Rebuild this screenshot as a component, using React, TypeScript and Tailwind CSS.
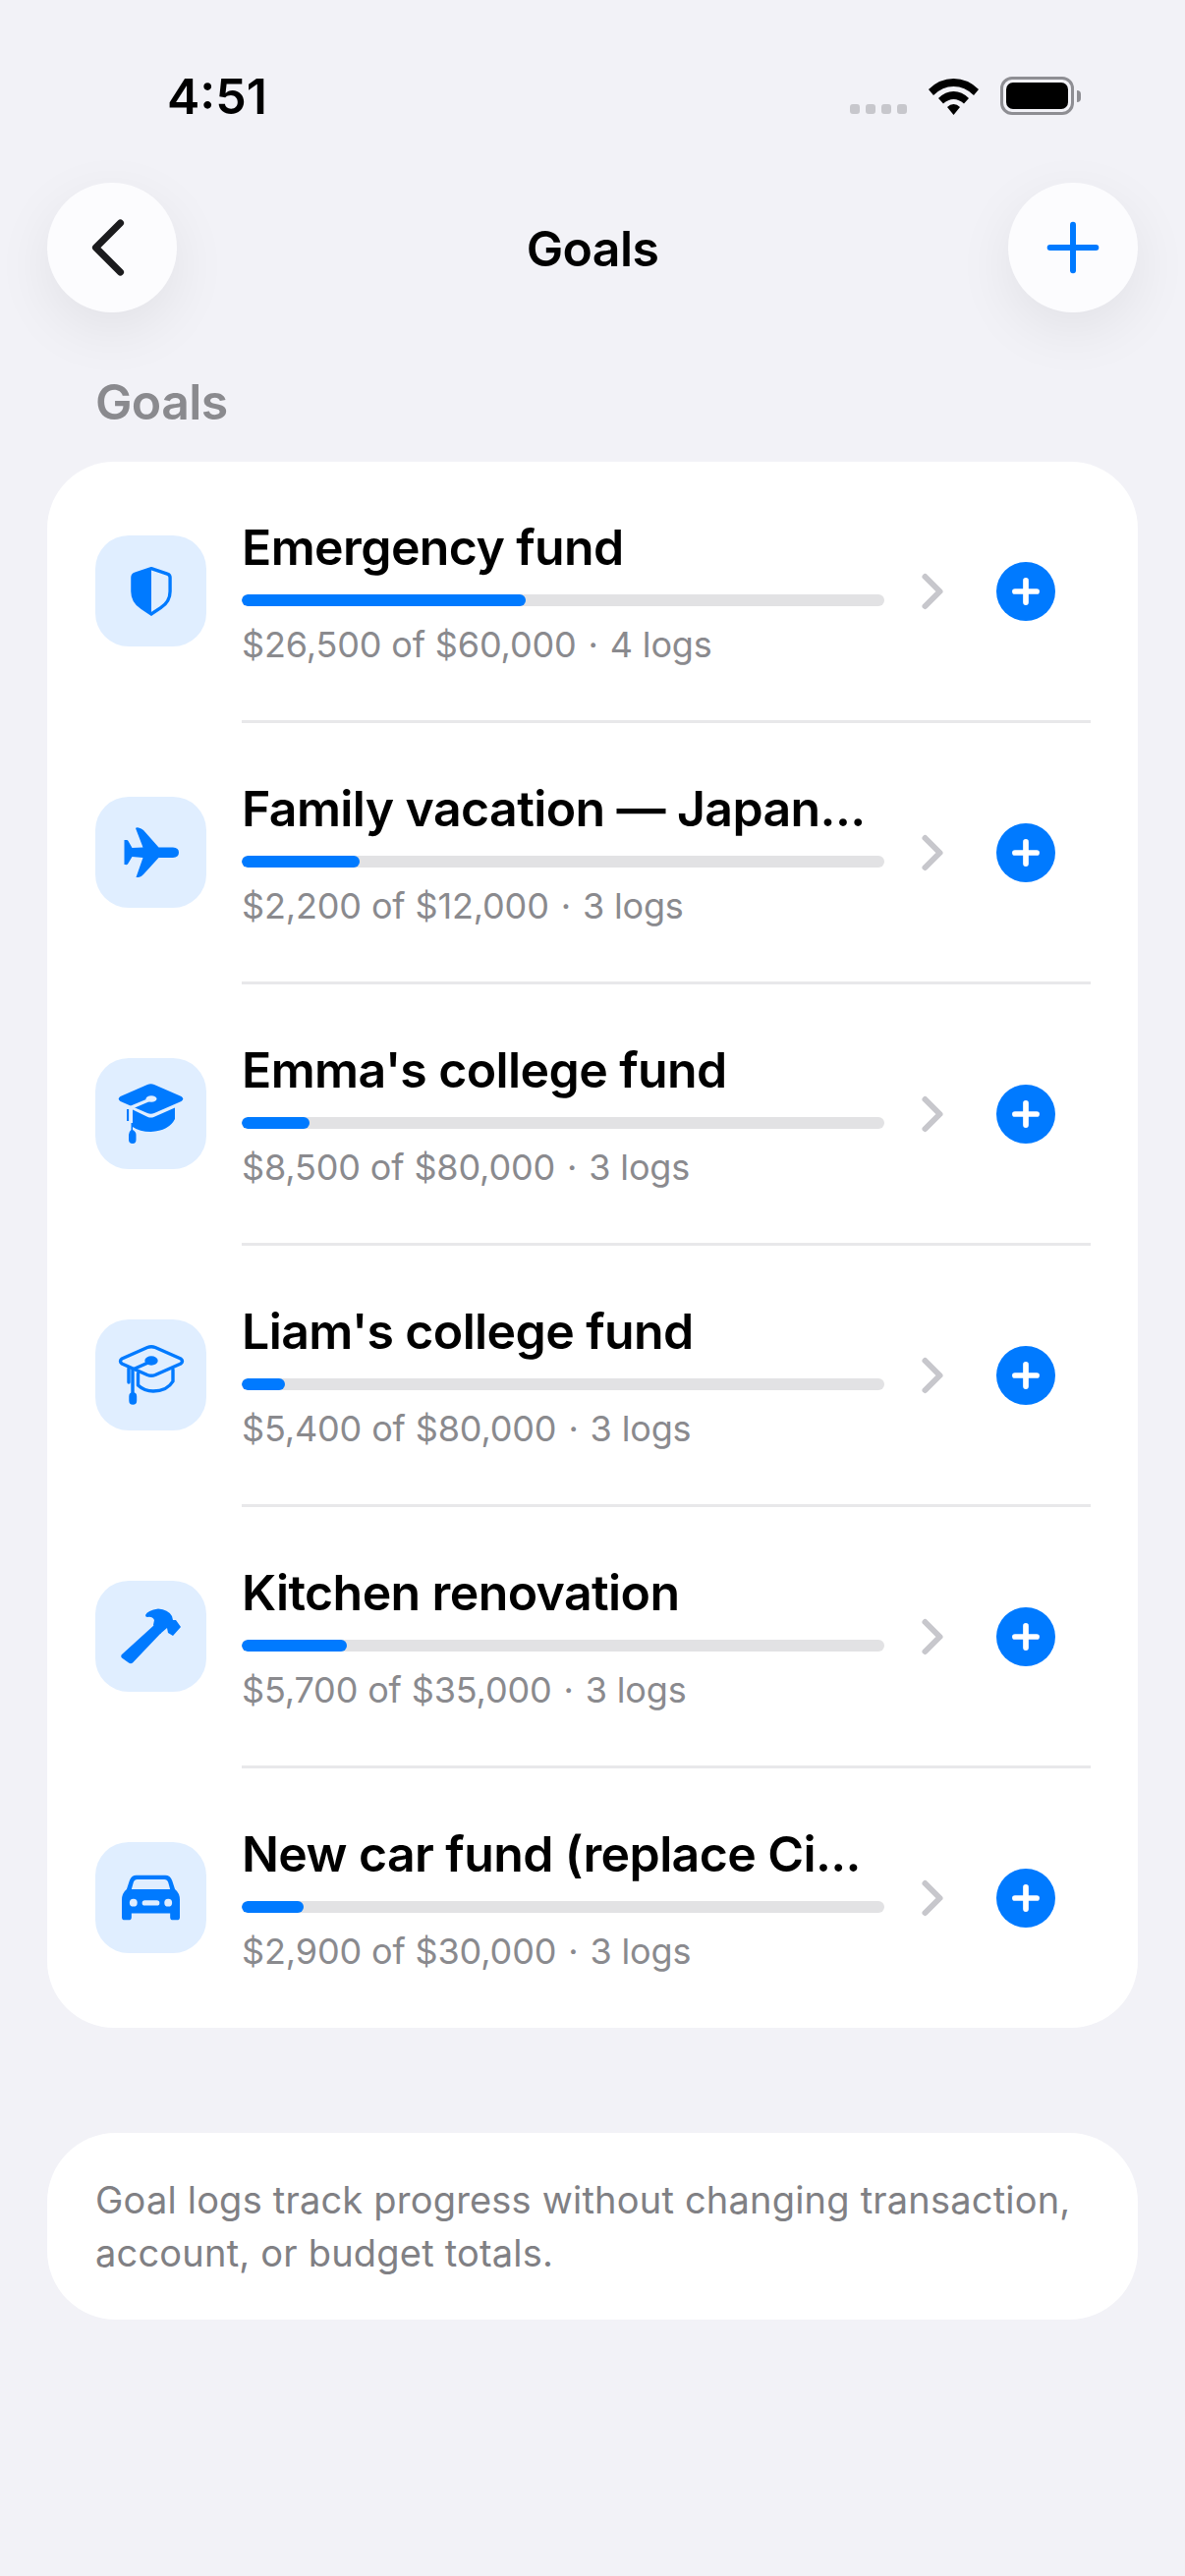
import { ChevronLeft, ChevronRight, Plus } from "lucide-react";
import type { ReactNode } from "react";

const BLUE = "#007aff";
const TILE = "#e0eeff";

function ShieldIcon() {
  return (
    <svg width="42" height="50" viewBox="0 0 44 52">
      <path
        d="M22 1.500 L39 7.200 Q42 8.200 42 11 V26 Q42 37 32 43.500 L22 50 L12 43.500 Q2 37 2 26 V11 Q2 8.200 5 7.200 Z"
        fill="none"
        stroke={BLUE}
        strokeWidth="3.500"
      />
      <path d="M22 1.500 V50 L12 43.500 Q2 37 2 26 V11 Q2 8.200 5 7.200 Z" fill={BLUE} />
    </svg>
  );
}

function PlaneIcon() {
  return (
    <svg width="56" height="51" viewBox="0 0 56 51" fill={BLUE}>
      <path d="M12 1 Q13 0 15 0.500 Q18 1 20 3 L35.500 20.500 H50 Q56 21 56 25.700 Q56 30.500 50 31 H35.500 L20 48 Q18 50.500 15 51 H12.500 L19.500 31 L8.500 30 L4 37.500 Q3 38.500 1.500 38 H0.500 V13 H3 Q4 13 4.500 14 L8.500 21 L19.500 20.500 Z" />
    </svg>
  );
}

function CapFilledIcon() {
  return (
    <svg width="67" height="61" viewBox="0 0 67 61" fill={BLUE}>
      <path d="M30 1 Q33.500 -0.500 37 1 L64.500 13 Q68 15.500 64.500 18 L37 30 Q33.500 31.500 30 30 L2.500 18 Q-1 15.500 2.500 13 Z" />
      <path d="M15 26.500 L30.500 34 Q33.500 35 36.500 34 L58 24.500 V36 Q52 48 33.500 49 Q22 49 15 44 Z" />
      <path d="M9 26 H11.500 V38 H9 Z" />
      <path d="M13.500 40 H15 V47 Q18.500 49 18.500 52 V57 Q18.500 61 15 61 Q11 61 11 57 V52 Q11 49 13.500 47 Z" />
      <path d="M33 16 L13 24.500 V40" fill="none" stroke={TILE} strokeWidth="3.500" />
      <ellipse cx="34" cy="15.500" rx="5.500" ry="3.200" fill={TILE} />
    </svg>
  );
}

function CapOutlineIcon() {
  return (
    <svg
      width="68"
      height="61"
      viewBox="0 0 68 61"
      fill="none"
      stroke={BLUE}
      strokeWidth="3.400"
      strokeLinejoin="round"
      strokeLinecap="round"
    >
      <path d="M30 2.500 Q34 1 38 2.500 L64 14 Q67 16.500 64 19 L38 30.500 Q34 32 30 30.500 L4 19 Q1 16.500 4 14 Z" />
      <path d="M33 17 L15 25 V50" />
      <path d="M20.500 29 V41 Q27 47 36 47 Q50 47 56 37 V25" />
      <path d="M11 24 V38" />
      <ellipse cx="34" cy="16" rx="5" ry="3" fill={BLUE} />
      <rect x="13" y="50" width="4.500" height="9" rx="2.200" fill={BLUE} />
    </svg>
  );
}

function HammerIcon() {
  return (
    <svg width="61" height="57" viewBox="0 0 61 57" fill={BLUE}>
      <path d="M34 17 L41 25 L12 55.500 Q10 57 8 55.500 L1 50.500 Q-0.500 48.500 1 47 Z" />
      <path d="M25 7 Q27 2 38 0.500 Q48 1 52 8 L53 12 L56 12 L61 19 L53 28 L48 25 L47 20 L40 26 L33 17 L34 12 Q32 8 27 9 Q25 9 25 7 Z" />
    </svg>
  );
}

function CarIcon() {
  return (
    <svg width="59" height="47" viewBox="0 0 60 47.500">
      <path
        fill={BLUE}
        fillRule="evenodd"
        d="M15 0.500 H45 Q50 0.500 52 6 L55 15 Q60 19 60 26 V44 Q60 47 57 47 H53 Q50 47 50 44 V40 H10 V44 Q10 47 7 47 H3 Q0 47 0 44 V26 Q0 19 5 15 L8 6 Q10 0.500 15 0.500 Z M16 5 Q13 5 12 8 L10 15 H50 L48 8 Q47 5 44 5 Z"
      />
      <circle cx="12" cy="29" r="4" fill={TILE} />
      <circle cx="48" cy="29" r="4" fill={TILE} />
      <rect x="21" y="26.500" width="18" height="5.500" rx="2.700" fill={TILE} />
    </svg>
  );
}

const goals: { name: string; amount: string; logs: string; pct: number; icon: ReactNode }[] = [
  { name: "Emergency fund", amount: "$26,500 of $60,000", logs: "4 logs", pct: 26500 / 60000, icon: <ShieldIcon /> },
  { name: "Family vacation — Japan...", amount: "$2,200 of $12,000", logs: "3 logs", pct: 2200 / 12000, icon: <PlaneIcon /> },
  { name: "Emma's college fund", amount: "$8,500 of $80,000", logs: "3 logs", pct: 8500 / 80000, icon: <CapFilledIcon /> },
  { name: "Liam's college fund", amount: "$5,400 of $80,000", logs: "3 logs", pct: 5400 / 80000, icon: <CapOutlineIcon /> },
  { name: "Kitchen renovation", amount: "$5,700 of $35,000", logs: "3 logs", pct: 5700 / 35000, icon: <HammerIcon /> },
  { name: "New car fund (replace Ci...", amount: "$2,900 of $30,000", logs: "3 logs", pct: 2900 / 30000, icon: <CarIcon /> },
];

function StatusBar() {
  return (
    <div className="flex h-[186px] items-start justify-between pl-[170px] pr-[106px] pt-[69px]">
      <span className="text-[50px] font-semibold leading-[58px] text-black">4:51</span>
      <div className="mt-[9px] flex items-end">
        <div className="mb-px flex gap-1.5">
          {[0, 1, 2, 3].map((i) => (
            <span key={i} className="h-[10px] w-[10px] rounded-[3px] bg-[#c7c7cc]" />
          ))}
        </div>
        <svg className="ml-[22px]" width="51" height="37" viewBox="0 0 51 37" fill="#000">
          <path d="M25.500 0 Q40 0 51 11 L46 17 Q37 8 25.500 8 Q14 8 5 17 L0 11 Q11 0 25.500 0 Z" />
          <path d="M25.500 13 Q34 13 41 20 L36 25.500 Q31 21 25.500 21 Q20 21 15 25.500 L10 20 Q17 13 25.500 13 Z" />
          <path d="M25.500 26 Q29 26 32 29 L25.500 37 L19 29 Q22 26 25.500 26 Z" />
        </svg>
        <div className="ml-[22px] flex items-center">
          <div className="h-[39px] w-[75px] rounded-[12px] border-[3px] border-[#8e8e93] p-[3px]">
            <div className="h-full w-full rounded-[7px] bg-black" />
          </div>
          <div className="ml-[3px] h-[12px] w-[4px] rounded-r-full bg-[#8e8e93]" />
        </div>
      </div>
    </div>
  );
}

function NavBar() {
  return (
    <div className="flex items-center justify-between px-12">
      <button className="flex h-[132px] w-[132px] items-center justify-center rounded-full bg-[#fcfcfe] pr-[9px] shadow-[0_18px_60px_rgba(0,0,0,0.07)]">
        <ChevronLeft size={100} strokeWidth={1.7} color="#1c1c1e" />
      </button>
      <h1 className="pt-[2px] text-[50px] font-semibold leading-[60px] tracking-[-0.6px] text-black">Goals</h1>
      <button className="flex h-[132px] w-[132px] items-center justify-center rounded-full bg-[#fcfcfe] shadow-[0_18px_60px_rgba(0,0,0,0.07)]">
        <Plus size={80} strokeWidth={1.8} color={BLUE} />
      </button>
    </div>
  );
}

function GoalRow({ name, amount, logs, pct, icon }: (typeof goals)[number]) {
  return (
    <div className="flex h-[263px] items-center pl-[49px] pr-[84px]">
      <div className="flex h-[113px] w-[113px] shrink-0 items-center justify-center rounded-[34px] bg-[#e0eeff]">
        {icon}
      </div>
      <div className="ml-9 w-[654px] shrink-0 pt-[3px]">
        <div className="truncate text-[50px] font-semibold leading-[60px] tracking-[-0.6px] text-black">{name}</div>
        <div className="mt-[18px] h-3 overflow-hidden rounded-full bg-[#e2e2e4]">
          <div className="h-full rounded-full bg-[#007aff]" style={{ width: `${pct * 100}%` }} />
        </div>
        <div className="mt-4 text-[36px] leading-[46px] tracking-[-0.15px] text-[#8a8a8e]">
          {amount}
          <span className="mx-[2px]"> · </span>
          {logs}
        </div>
      </div>
      <ChevronRight size={60} strokeWidth={2.4} color="#c7c7cc" className="ml-[19px] shrink-0" />
      <div className="ml-[35px] flex h-[60px] w-[60px] shrink-0 items-center justify-center rounded-full bg-[#007aff]">
        <Plus size={38} strokeWidth={3.6} color="#fff" />
      </div>
    </div>
  );
}

export default function App() {
  return (
    <div className="h-[2622px] w-[1206px] overflow-hidden bg-[#f2f2f7] font-['Inter',sans-serif]">
      <StatusBar />
      <NavBar />
      <div className="mt-[61px] pl-[97px] text-[50px] font-semibold leading-[60px] tracking-[-0.6px] text-[#8a8a8e]">
        Goals
      </div>
      <div className="mx-12 mt-[31px] rounded-[68px] bg-white pb-px">
        {goals.map((g, i) => (
          <div key={g.name}>
            {i > 0 && <div className="ml-[198px] mr-12 h-[3px] bg-[#e8e8ea]" />}
            <GoalRow {...g} />
          </div>
        ))}
      </div>
      <div className="mx-12 mt-[107px] rounded-[70px] bg-white pb-[41px] pl-[49px] pr-8 pt-[41px] text-[38px] leading-[54px] tracking-[0.2px] text-[#808084]">
        Goal logs track progress without changing transaction, account, or budget totals.
      </div>
    </div>
  );
}
